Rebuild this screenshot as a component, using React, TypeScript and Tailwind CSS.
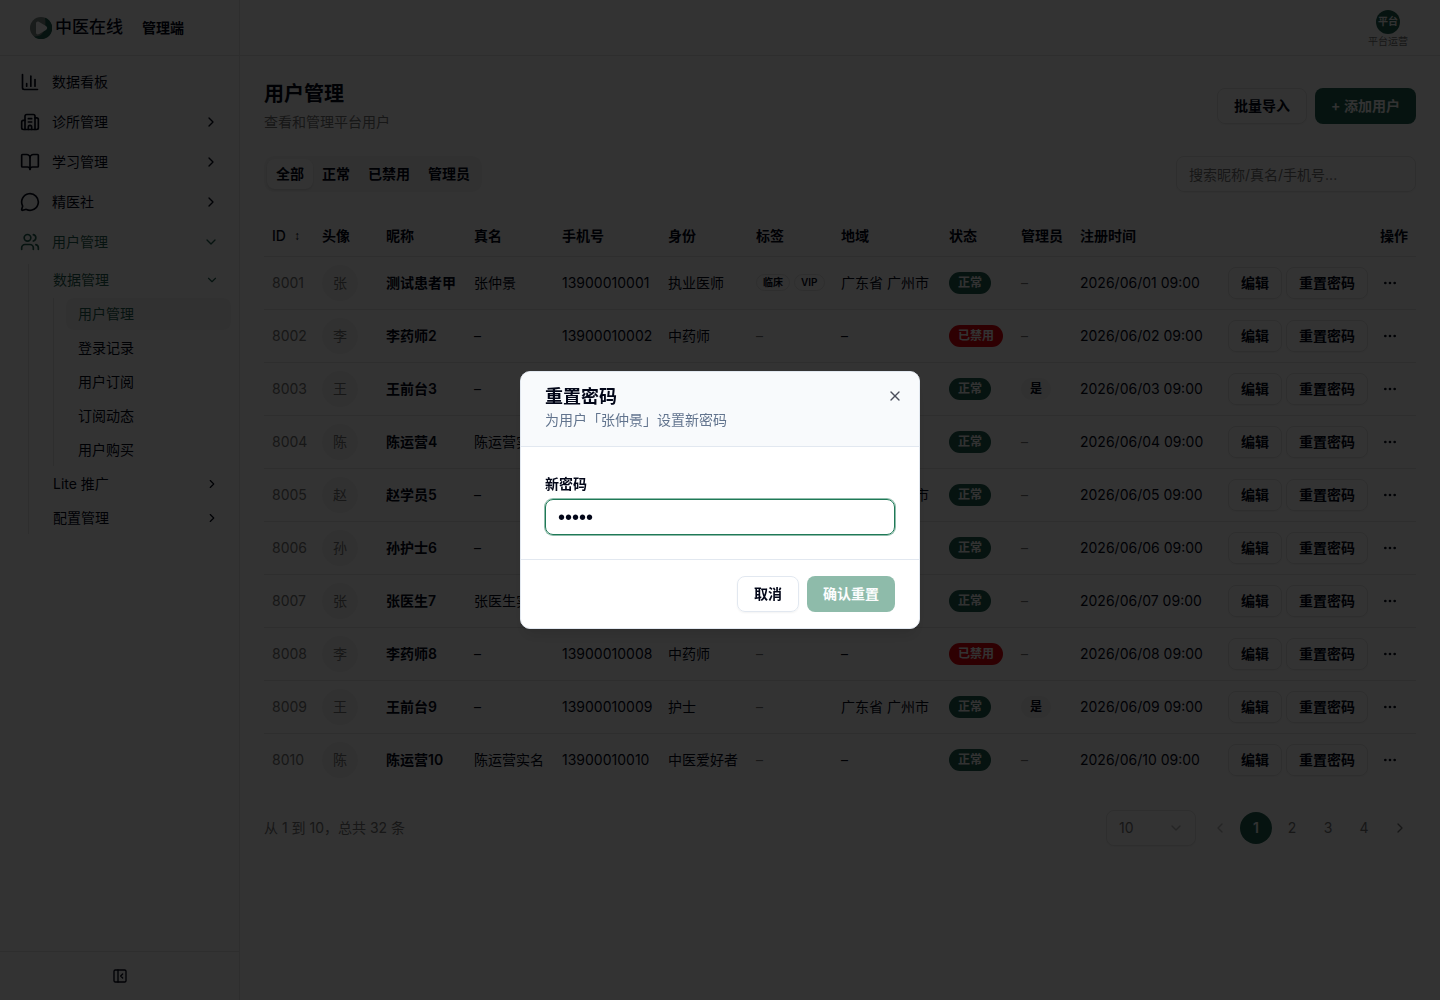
import { useState } from "react";
import {
    BookOpen,
    Building2,
    ChartColumn,
    ChevronDown,
    ChevronLeft,
    ChevronRight,
    Ellipsis,
    MessageCircle,
    PanelLeftClose,
    Users,
    X,
} from "lucide-react";

interface User {
    id: number;
    nickname: string;
    realName?: string;
    phone: string;
    role: string;
    tags?: string[];
    region?: string;
    disabled?: boolean;
    admin?: boolean;
    createdAt: string;
}

const users: User[] = [
    { id: 8001, nickname: "测试患者甲", realName: "张仲景", phone: "13900010001", role: "执业医师", tags: ["临床", "VIP"], region: "广东省 广州市", createdAt: "2026/06/01 09:00" },
    { id: 8002, nickname: "李药师2", phone: "13900010002", role: "中药师", disabled: true, createdAt: "2026/06/02 09:00" },
    { id: 8003, nickname: "王前台3", phone: "13900010003", role: "护士", admin: true, createdAt: "2026/06/03 09:00" },
    { id: 8004, nickname: "陈运营4", realName: "陈运营实名", phone: "13900010004", role: "中医爱好者", createdAt: "2026/06/04 09:00" },
    { id: 8005, nickname: "赵学员5", phone: "13900010005", role: "执业医师", region: "广东省 广州市", createdAt: "2026/06/05 09:00" },
    { id: 8006, nickname: "孙护士6", phone: "13900010006", role: "中药师", createdAt: "2026/06/06 09:00" },
    { id: 8007, nickname: "张医生7", realName: "张医生实名", phone: "13900010007", role: "护士", createdAt: "2026/06/07 09:00" },
    { id: 8008, nickname: "李药师8", phone: "13900010008", role: "中药师", disabled: true, createdAt: "2026/06/08 09:00" },
    { id: 8009, nickname: "王前台9", phone: "13900010009", role: "护士", region: "广东省 广州市", admin: true, createdAt: "2026/06/09 09:00" },
    { id: 8010, nickname: "陈运营10", realName: "陈运营实名", phone: "13900010010", role: "中医爱好者", createdAt: "2026/06/10 09:00" },
];

const navItems = [
    { label: "数据看板", icon: ChartColumn, expandable: false },
    { label: "诊所管理", icon: Building2, expandable: true },
    { label: "学习管理", icon: BookOpen, expandable: true },
    { label: "精医社", icon: MessageCircle, expandable: true },
];

const dataLinks = ["用户管理", "登录记录", "用户订阅", "订阅动态", "用户购买"];
const tabs = ["全部", "正常", "已禁用", "管理员"];

const Logo = () => (
    <svg viewBox="0 0 22 22" className="size-[22px]" aria-hidden="true">
        <circle cx="11" cy="11" r="11" fill="#7d8a85" />
        <path d="M15 0.8A11 11 0 1 1 4 19.4C12 20 17 14 15 0.8Z" fill="#1f5f50" />
        <path d="M6 6.5C6 4.6 7.6 4 9.2 5L16 9C17.6 10 17.6 12 16 13L9.2 17C7.6 18 6 17.3 6 15.5Z" fill="#fff" />
    </svg>
);

const Sidebar = () => (
    <aside className="flex w-60 shrink-0 flex-col border-r border-neutral-200">
        <div className="flex h-14 shrink-0 items-center border-b border-neutral-200 pl-[30px]">
            <Logo />
            <span className="ml-[3px] text-[17px] font-medium">中医在线</span>
            <span className="ml-[19px] text-sm font-semibold">管理端</span>
        </div>
        <nav className="flex flex-1 flex-col gap-1 p-2">
            {navItems.map(({ label, icon: Icon, expandable }) => (
                <button key={label} className="flex h-9 items-center gap-3 px-3 text-sm">
                    <Icon className="size-5" />
                    {label}
                    {expandable && <ChevronRight className="ml-auto size-4" />}
                </button>
            ))}
            <button className="flex h-9 items-center gap-3 px-3 text-sm text-[#1f5f50]">
                <Users className="size-5" />
                用户管理
                <ChevronDown className="ml-auto size-4" />
            </button>
            <div className="ml-5 flex flex-col gap-[2px] border-l border-neutral-200 pl-3">
                <button className="flex h-8 items-center justify-between px-3 text-sm text-[#1f5f50]">
                    数据管理
                    <ChevronDown className="size-[14px]" />
                </button>
                <div className="ml-3 flex flex-col gap-[2px] border-l border-neutral-200 pl-3">
                    {dataLinks.map((label, i) => (
                        <a
                            key={label}
                            href="#"
                            className={`flex h-8 items-center rounded-lg px-3 text-sm ${i === 0 ? "bg-neutral-100 text-[#1f5f50]" : ""}`}
                        >
                            {label}
                        </a>
                    ))}
                </div>
                {["Lite 推广", "配置管理"].map((label) => (
                    <button key={label} className="flex h-8 items-center justify-between px-3 text-sm">
                        {label}
                        <ChevronRight className="size-[14px]" />
                    </button>
                ))}
            </div>
        </nav>
        <div className="flex border-t border-neutral-200 p-2">
            <button aria-label="收起侧栏" className="flex h-8 flex-1 items-center justify-center">
                <PanelLeftClose className="size-4" />
            </button>
        </div>
    </aside>
);

const StatusBadge = ({ disabled }: { disabled?: boolean }) => (
    <span
        className={`inline-flex h-[22px] items-center rounded-full px-[9px] text-xs font-semibold text-neutral-50 ${disabled ? "bg-[#e7000b]" : "bg-[#1f5f50]"}`}
    >
        {disabled ? "已禁用" : "正常"}
    </span>
);

const UserTable = () => (
    <div className="mt-6 overflow-x-auto">
        <table className="w-full min-w-[1152px] table-fixed text-left text-sm">
            <thead>
                <tr className="h-10 border-b border-neutral-200 [&>th]:px-2 [&>th]:font-semibold">
                    <th className="w-[50px]">
                        <button className="flex items-center gap-2 font-medium">
                            ID <span className="font-['Liberation_Sans',sans-serif] text-xs">↕</span>
                        </button>
                    </th>
                    <th className="w-[64px]">头像</th>
                    <th className="w-[88px]">昵称</th>
                    <th className="w-[88px]">真名</th>
                    <th className="w-[106px]">手机号</th>
                    <th className="w-[88px]">身份</th>
                    <th className="w-[85px]">标签</th>
                    <th className="w-[108px]">地域</th>
                    <th className="w-[72px]">状态</th>
                    <th className="w-[59px]">管理员</th>
                    <th className="w-[148px]">注册时间</th>
                    <th className="text-right">操作</th>
                </tr>
            </thead>
            <tbody>
                {users.map((user) => (
                    <tr key={user.id} className="h-[53px] border-b border-neutral-200 whitespace-nowrap last:border-0 [&>td]:px-2">
                        <td className="text-neutral-500">{user.id}</td>
                        <td>
                            <span className="flex size-9 items-center justify-center rounded-full bg-neutral-100 text-neutral-500">
                                {user.nickname === "测试患者甲" ? "张" : user.nickname[0]}
                            </span>
                        </td>
                        <td className="font-semibold">{user.nickname}</td>
                        <td>{user.realName ?? "–"}</td>
                        <td>{user.phone}</td>
                        <td>{user.role}</td>
                        <td>
                            {user.tags ? (
                                <div className="flex gap-1">
                                    {user.tags.map((tag) => (
                                        <span key={tag} className="flex h-[17px] items-center rounded-full border border-neutral-200 px-[6px] text-[10px] font-semibold">
                                            {tag}
                                        </span>
                                    ))}
                                </div>
                            ) : (
                                <span className="text-neutral-500">–</span>
                            )}
                        </td>
                        <td>{user.region ?? "–"}</td>
                        <td><StatusBadge disabled={user.disabled} /></td>
                        <td>
                            {user.admin ? (
                                <span className="inline-flex h-[22px] items-center rounded-full bg-neutral-100 px-[9px] text-xs font-semibold">是</span>
                            ) : (
                                <span className="text-neutral-500">–</span>
                            )}
                        </td>
                        <td>{user.createdAt}</td>
                        <td>
                            <div className="flex items-center justify-end gap-1">
                                <button className="h-8 rounded-lg border border-neutral-200 px-3 font-semibold shadow-xs">编辑</button>
                                <button className="h-8 rounded-lg border border-neutral-200 px-3 font-semibold shadow-xs">重置密码</button>
                                <button aria-label="更多操作" className="flex h-8 w-9 items-center justify-center">
                                    <Ellipsis className="size-4" />
                                </button>
                            </div>
                        </td>
                    </tr>
                ))}
            </tbody>
        </table>
    </div>
);

const Pagination = () => (
    <div className="mt-6 flex items-center justify-between text-sm text-neutral-500">
        <p>从 1 到 10，总共 32 条</p>
        <div className="flex items-center gap-2">
            <div className="relative">
                <select aria-label="每页条数" className="block h-9 w-[90px] appearance-none rounded-lg border border-neutral-200 bg-white px-3 shadow-xs">
                    <option>10</option>
                    <option>20</option>
                    <option>50</option>
                </select>
                <ChevronDown className="pointer-events-none absolute top-[10px] right-3 size-4 opacity-50" />
            </div>
            <div className="flex gap-1">
                <button aria-label="上一页" disabled className="flex size-8 items-center justify-center opacity-50">
                    <ChevronLeft className="size-4" />
                </button>
                {[1, 2, 3, 4].map((page) => (
                    <button key={page} className={`size-8 rounded-full ${page === 1 ? "bg-[#1f5f50] font-semibold text-neutral-50" : ""}`}>
                        {page}
                    </button>
                ))}
                <button aria-label="下一页" className="flex size-8 items-center justify-center">
                    <ChevronRight className="size-4" />
                </button>
            </div>
        </div>
    </div>
);

const ResetPasswordDialog = () => {
    const [password, setPassword] = useState("12345");

    return (
        <div className="fixed inset-0 flex items-center justify-center bg-black/80">
            <div
                role="dialog"
                aria-modal="true"
                aria-labelledby="reset-title"
                className="relative w-full max-w-[400px] overflow-hidden rounded-[10px] border border-slate-200 bg-white shadow-lg"
            >
                <div className="flex flex-col gap-1 border-b border-slate-200 bg-slate-50 px-6 py-4">
                    <h2 id="reset-title" className="text-lg leading-none font-semibold">重置密码</h2>
                    <p className="text-sm text-slate-500">为用户「张仲景」设置新密码</p>
                </div>
                <div className="p-6">
                    <label htmlFor="new-password" className="mb-[2px] block text-sm leading-[26px] font-semibold">新密码</label>
                    <input
                        id="new-password"
                        type="password"
                        value={password}
                        onChange={(e) => setPassword(e.target.value)}
                        className="block h-9 w-full rounded-lg border border-[#1f7957] px-3 font-['Liberation_Sans',sans-serif] text-xl ring-1 ring-[#1f7957]/50 outline-none"
                    />
                </div>
                <div className="flex justify-end gap-2 border-t border-slate-200 px-6 py-4">
                    <button className="h-9 rounded-lg border border-slate-200 px-4 text-sm font-semibold shadow-xs">取消</button>
                    <button disabled className="h-9 rounded-lg bg-[#1f7957] px-4 text-sm font-semibold text-slate-50 opacity-50">确认重置</button>
                </div>
                <button aria-label="关闭" className="absolute top-4 right-4 opacity-70">
                    <X className="size-4" />
                </button>
            </div>
        </div>
    );
};

const App = () => {
    return (
        <div className="flex min-h-screen bg-white font-[Inter,'Noto_Sans_CJK_SC',sans-serif] text-slate-950">
            <Sidebar />
            <div className="flex min-w-0 flex-1 flex-col">
                <header className="flex h-14 shrink-0 items-center justify-end border-b border-neutral-200 px-8 pt-[2px]">
                    <button className="flex flex-col items-center">
                        <span className="flex size-6 items-center justify-center rounded-full bg-[#1f5f50] text-[10px] font-semibold text-neutral-50">平台</span>
                        <span className="text-[10px] leading-[14px] text-neutral-500">平台运营</span>
                    </button>
                </header>
                <main className="flex-1 p-6">
                    <div className="flex items-center justify-between">
                        <div>
                            <h1 className="text-xl leading-7 font-semibold">用户管理</h1>
                            <p className="mt-1 text-sm text-neutral-500">查看和管理平台用户</p>
                        </div>
                        <div className="flex gap-2">
                            <button className="h-9 rounded-lg border border-neutral-200 px-4 text-sm font-semibold shadow-xs">批量导入</button>
                            <button className="h-9 rounded-lg bg-[#1f5f50] px-4 text-sm font-semibold text-neutral-50">+ 添加用户</button>
                        </div>
                    </div>
                    <div className="mt-6 flex items-center justify-between">
                        <div role="tablist" className="flex h-9 rounded-[10px] bg-neutral-100 p-[3px]">
                            {tabs.map((tab, i) => (
                                <button
                                    key={tab}
                                    role="tab"
                                    aria-selected={i === 0}
                                    className={`rounded-lg px-[9px] text-sm font-semibold ${i === 0 ? "bg-white shadow-sm" : ""}`}
                                >
                                    {tab}
                                </button>
                            ))}
                        </div>
                        <input
                            type="search"
                            aria-label="搜索用户"
                            placeholder="搜索昵称/真名/手机号..."
                            className="h-9 w-60 rounded-lg border border-neutral-200 px-3 text-sm shadow-xs placeholder:text-neutral-500"
                        />
                    </div>
                    <UserTable />
                    <Pagination />
                </main>
            </div>
            <ResetPasswordDialog />
        </div>
    );
};

export default App;
